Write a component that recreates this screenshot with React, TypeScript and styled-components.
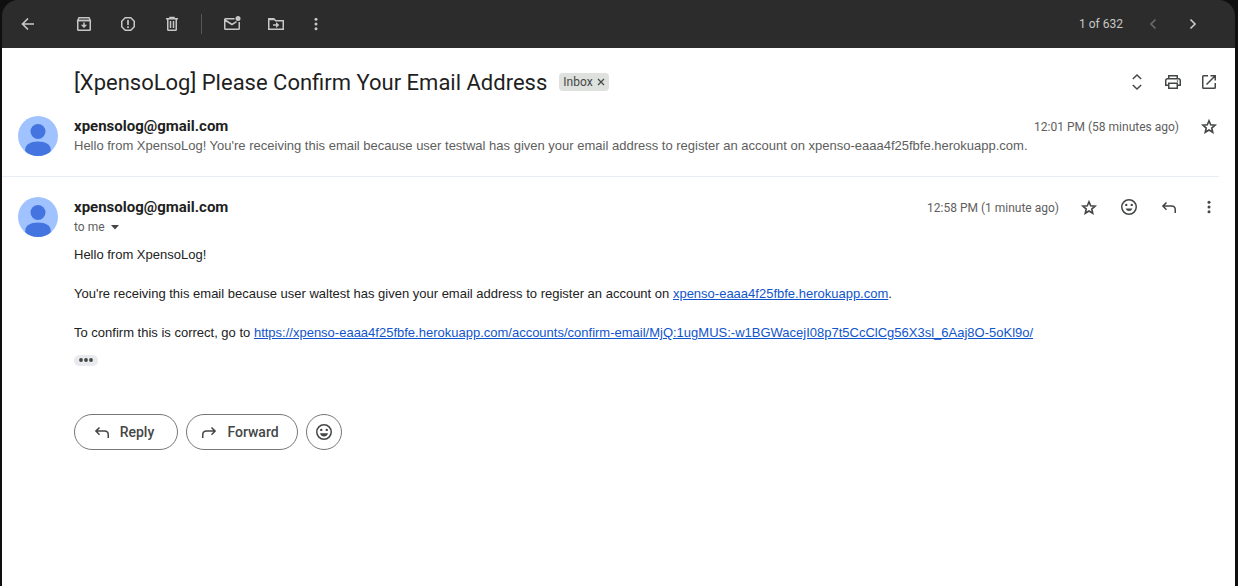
import React from 'react';
import styled, { createGlobalStyle } from 'styled-components';

const GlobalStyle = createGlobalStyle`
  *, *::before, *::after { box-sizing: border-box; }
  body { margin: 0; background: #0f0f0f; }
  button { font: inherit; color: inherit; cursor: pointer; }
`;

const uiFont = `Roboto, 'Liberation Sans', sans-serif`;
const textFont = `'Liberation Sans', Arial, sans-serif`;

const Window = styled.div`
  min-height: 100vh;
  margin: 0 3px 0 2px;
  display: flex;
  flex-direction: column;
  font-family: ${uiFont};
  color: #1f1f1f;
`;

const Toolbar = styled.header`
  display: flex;
  align-items: center;
  justify-content: space-between;
  height: 48px;
  padding: 0 22px 0 4px;
  border-radius: 16px 16px 0 0;
  background: #2c2c2c;
  color: #c7c7c7;
`;

const Group = styled.div`
  display: flex;
  align-items: center;
`;

const IconButton = styled.button<{ $width?: number }>`
  display: flex;
  align-items: center;
  justify-content: center;
  flex: none;
  width: ${({ $width }) => $width ?? 40}px;
  height: 36px;
  padding: 0;
  border: 0;
  background: none;

  &:disabled { color: #6b6b6b; }
`;

const BackButton = styled(IconButton)`
  margin-right: 12px;
`;

const ToolbarDivider = styled.span`
  width: 1px;
  height: 20px;
  margin: 0 8px 0 7px;
  background: #575757;
`;

const PageCount = styled.span`
  margin-right: 10px;
  font-size: 12px;
  line-height: 20px;
`;

const Thread = styled.main`
  flex: 1;
  background: #fff;
`;

const SubjectRow = styled.div`
  display: flex;
  align-items: center;
  justify-content: space-between;
  height: 68px;
  padding: 0 8px 0 72px;
  color: #444746;
`;

const Subject = styled.h1`
  margin: 0 12px 0 0;
  padding-top: 2px;
  font-size: 22px;
  line-height: 28px;
  font-weight: 400;
  color: #1f1f1f;
`;

const Label = styled.span`
  display: flex;
  align-items: center;
  height: 18px;
  padding: 0 4px;
  gap: 4px;
  border-radius: 4px;
  background: #dfe1df;
  font-size: 12px;
  color: #444746;
`;

const LabelRemove = styled.button`
  display: flex;
  padding: 0;
  border: 0;
  background: none;
`;

const Message = styled.article`
  display: flex;
  align-items: flex-start;
  gap: 16px;
  padding: 0 0 20px 16px;
`;

const Divider = styled.hr`
  height: 1px;
  margin: 0 16px 20px 0;
  border: 0;
  background: #e9eef6;
`;

const MessageMain = styled.div`
  flex: 1;
  min-width: 0;
`;

const MessageHead = styled.div`
  display: flex;
  align-items: center;
  justify-content: space-between;
  height: 20px;
  padding-right: 6px;
  color: #444746;
`;

const Sender = styled.h2`
  margin: 0;
  font-size: 15px;
  line-height: 20px;
  font-weight: 700;
  color: #1f1f1f;
`;

const Time = styled.time`
  margin-right: 10px;
  padding-top: 2px;
  font-size: 12px;
  line-height: 20px;
  color: #5e5e5e;
`;

const Snippet = styled.p`
  margin: 0;
  font-family: ${textFont};
  font-size: 13px;
  line-height: 20px;
  color: #5e5e5e;
`;

const Recipient = styled.button`
  display: flex;
  align-items: center;
  gap: 5px;
  height: 20px;
  padding: 0;
  border: 0;
  background: none;
  font-size: 12px;
  line-height: 20px;
  color: #5e5e5e;
`;

const MessageBody = styled.div`
  display: flex;
  flex-direction: column;
  gap: 19px;
  padding-top: 8px;
  font-family: ${textFont};
  font-size: 13px;
  line-height: 20px;
  color: #222;
`;

const Paragraph = styled.p`
  margin: 0;
`;

const Link = styled.a`
  color: #1155cc;
  text-decoration: underline;
`;

const TrimmedButton = styled.button`
  display: flex;
  align-items: center;
  justify-content: center;
  width: 24px;
  height: 11px;
  margin-top: 12px;
  padding: 0;
  border: 0;
  border-radius: 6px;
  background: #e8eaed;
  color: #444746;
`;

const Actions = styled.div`
  display: flex;
  gap: 8px;
  margin-top: 48px;
`;

const ActionButton = styled.button<{ $width: number }>`
  display: flex;
  align-items: center;
  justify-content: center;
  gap: 8px;
  width: ${({ $width }) => $width}px;
  height: 36px;
  padding: 0;
  border: 1px solid #747775;
  border-radius: 18px;
  background: #fff;
  font-size: 14px;
  font-weight: 500;
  color: #444746;
`;

const ActionText = styled.span`
  margin-right: 6px;
`;

type IconProps = { children: React.ReactNode; size?: number };

const Icon = ({ children, size = 20 }: IconProps) => (
  <svg width={size} height={size} viewBox="0 0 20 20" fill="none" stroke="currentColor" strokeWidth="1.5" aria-hidden="true">
    {children}
  </svg>
);

const BackIcon = () => <Icon><path d="M16 10H5M10 4.5 4.5 10l5.500 5.500" strokeWidth="1.700" /></Icon>;
const ArchiveIcon = () => (
  <Icon>
    <path d="M3.750 6.500v9q0 .75.75.75h11q.75 0 .75-.75v-9M3.750 6.500 5 3.750h10l1.250 2.750z" />
    <path d="M4.500 6.500h11" />
    <path d="M10 8.500v3.500" />
    <path d="M6.800 10.700h6.400L10 14z" fill="currentColor" stroke="none" />
  </Icon>
);
const SpamIcon = () => (
  <Icon>
    <path d="M7.200 3.750h5.600l3.450 3.450v5.600l-3.450 3.450H7.200l-3.450-3.450V7.200z" />
    <path d="M10 6v5M10 12.300v1.700" strokeWidth="1.700" />
  </Icon>
);
const TrashIcon = () => (
  <Icon><path d="M4 4.750h12M8 4V3.500h4V4M5.750 5v10.500q0 .75.75.75h7q.75 0 .75-.75V5M8.500 7v7M11.500 7v7" /></Icon>
);
const UnreadIcon = () => (
  <Icon>
    <path d="M12.500 4.750h-9q-.75 0-.75.75v9q0 .75.75.75h13q.75 0 .75-.75V8M3 6l7 4.500L14.500 7.700" />
    <circle cx="16" cy="4.500" r="2.500" fill="currentColor" stroke="none" />
  </Icon>
);
const MoveIcon = () => (
  <Icon>
    <path d="M2.750 15.250V4.750h5l2 2h7.500v8.500zM3 5.500h5.500M7 11h4" />
    <path d="M10 8v6l3.300-3z" fill="currentColor" stroke="none" />
  </Icon>
);
const MoreIcon = () => (
  <Icon>
    <g fill="currentColor" stroke="none">
      <circle cx="10" cy="5.300" r="1.500" /><circle cx="10" cy="10" r="1.500" /><circle cx="10" cy="14.700" r="1.500" />
    </g>
  </Icon>
);
const PrevIcon = () => <Icon><path d="M12.500 5.500 8 10l4.500 4.500" strokeWidth="1.700" /></Icon>;
const NextIcon = () => <Icon><path d="M7.500 5.500 12 10l-4.500 4.500" strokeWidth="1.700" /></Icon>;
const ExpandIcon = () => <Icon><path d="M5.800 7 10 3l4.200 4M5.800 13l4.200 4 4.200-4" /></Icon>;
const PrintIcon = () => (
  <Icon>
    <path d="M5.750 6.500V3.750h8.500V6.500M5.500 13.250H2.750V8.500q0-1.750 1.750-1.750h11q1.750 0 1.750 1.750v4.750H14.500M5.750 11.250h8.500v5h-8.500z" />
    <circle cx="14.500" cy="9" r=".8" fill="currentColor" stroke="none" />
  </Icon>
);
const OpenIcon = () => (
  <Icon><path d="M9 3.750H4.500q-.75 0-.75.75v11q0 .75.75.75h11q.75 0 .75-.75V11M11.500 3.750h4.750V8.500M16 4 7.500 12.500" /></Icon>
);
const StarIcon = () => (
  <Icon><path d="m10 4.800 1.700 4 4.400.4-3.350 2.850 1 4.250-3.750-2.250-3.750 2.250 1-4.250L3.900 9.200l4.400-.4z" strokeWidth="1.600" /></Icon>
);
const SmileIcon = ({ wide = false }: { wide?: boolean }) => (
  <Icon>
    <circle cx="10" cy="10" r="7.250" />
    <g fill="currentColor" stroke="none">
      <circle cx="7.250" cy="7.900" r="1.200" /><circle cx="12.750" cy="7.900" r="1.200" />
      <path d={wide ? 'M6 11.300h8Q13 14.600 10 14.600t-4-3.300z' : 'M6.500 11.500h7Q12.500 14 10 14t-3.500-2.500z'} />
    </g>
  </Icon>
);
const ReplyIcon = () => <Icon><path d="M7.500 5.500 3.900 9.100l3.600 3.600M4 9.100h8.500q3.750 0 3.750 3.750V16" /></Icon>;
const ForwardIcon = () => <Icon><path d="m12.500 5.500 3.600 3.600-3.600 3.600M16 9.100H7.500q-3.750 0-3.750 3.750V16" /></Icon>;

const Avatar = ({ id }: { id: string }) => (
  <svg width="40" height="40" viewBox="0 0 40 40" aria-hidden="true">
    <clipPath id={id}><circle cx="20" cy="20" r="20" /></clipPath>
    <g clipPath={`url(#${id})`}>
      <path fill="#a0c3ff" d="M0 0h40v40H0z" />
      <circle cx="20" cy="15.500" r="7.500" fill="#4374e0" />
      <path fill="#4374e0" d="M7.300 40v-7c0-4 5-7.500 12.700-7.500S32.700 29 32.700 33v7z" />
    </g>
  </svg>
);

export default function App() {
  return (
    <>
      <GlobalStyle />
      <Window>
        <Toolbar>
          <Group>
            <BackButton aria-label="Back to inbox" $width={44}><BackIcon /></BackButton>
            <IconButton aria-label="Archive" $width={44}><ArchiveIcon /></IconButton>
            <IconButton aria-label="Report spam" $width={44}><SpamIcon /></IconButton>
            <IconButton aria-label="Delete" $width={44}><TrashIcon /></IconButton>
            <ToolbarDivider />
            <IconButton aria-label="Mark as unread" $width={44}><UnreadIcon /></IconButton>
            <IconButton aria-label="Move to" $width={44}><MoveIcon /></IconButton>
            <IconButton aria-label="More" $width={36}><MoreIcon /></IconButton>
          </Group>
          <Group>
            <PageCount>1 of 632</PageCount>
            <IconButton aria-label="Newer" disabled><PrevIcon /></IconButton>
            <IconButton aria-label="Older"><NextIcon /></IconButton>
          </Group>
        </Toolbar>
        <Thread>
          <SubjectRow>
            <Group>
              <Subject>[XpensoLog] Please Confirm Your Email Address</Subject>
              <Label>
                Inbox
                <LabelRemove aria-label="Remove label Inbox">
                  <svg width="8" height="8" viewBox="0 0 8 8" stroke="currentColor" strokeWidth="1.200" aria-hidden="true">
                    <path d="m1 1 6 6M7 1 1 7" />
                  </svg>
                </LabelRemove>
              </Label>
            </Group>
            <Group>
              <IconButton aria-label="Expand all" $width={36}><ExpandIcon /></IconButton>
              <IconButton aria-label="Print all" $width={36}><PrintIcon /></IconButton>
              <IconButton aria-label="Open in new window" $width={36}><OpenIcon /></IconButton>
            </Group>
          </SubjectRow>

          <Message>
            <Avatar id="avatar-first" />
            <MessageMain>
              <MessageHead>
                <Sender>xpensolog@gmail.com</Sender>
                <Group>
                  <Time>12:01 PM (58 minutes ago)</Time>
                  <IconButton aria-label="Star"><StarIcon /></IconButton>
                </Group>
              </MessageHead>
              <Snippet>
                Hello from XpensoLog! You're receiving this email because user testwal has given your email address to register an account on xpenso-eaaa4f25fbfe.herokuapp.com.
              </Snippet>
            </MessageMain>
          </Message>
          <Divider />
          <Message>
            <Avatar id="avatar-second" />
            <MessageMain>
              <MessageHead>
                <Sender>xpensolog@gmail.com</Sender>
                <Group>
                  <Time>12:58 PM (1 minute ago)</Time>
                  <IconButton aria-label="Star"><StarIcon /></IconButton>
                  <IconButton aria-label="Add reaction"><SmileIcon /></IconButton>
                  <IconButton aria-label="Reply"><ReplyIcon /></IconButton>
                  <IconButton aria-label="More"><MoreIcon /></IconButton>
                </Group>
              </MessageHead>
              <Recipient>
                to me
                <svg width="10" height="5" viewBox="0 0 10 5" fill="#444746" aria-hidden="true"><path d="M1 0h8L5 4.500z" /></svg>
              </Recipient>
              <MessageBody>
                <Paragraph>Hello from XpensoLog!</Paragraph>
                <Paragraph>
                  You're receiving this email because user waltest has given your email address to register an account on{' '}
                  <Link href="#site">xpenso-eaaa4f25fbfe.herokuapp.com</Link>.
                </Paragraph>
                <Paragraph>
                  To confirm this is correct, go to{' '}
                  <Link href="#confirm">https://xpenso-eaaa4f25fbfe.herokuapp.com/accounts/confirm-email/MjQ:1ugMUS:-w1BGWacejI08p7t5CcClCg56X3sl_6Aaj8O-5oKl9o/</Link>
                </Paragraph>
              </MessageBody>
              <TrimmedButton aria-label="Show trimmed content">
                <svg width="14" height="5" viewBox="0 0 14 5" fill="currentColor" aria-hidden="true">
                  <circle cx="2" cy="2" r="1.900" /><circle cx="7" cy="2" r="1.900" /><circle cx="12" cy="2" r="1.900" />
                </svg>
              </TrimmedButton>
              <Actions>
                <ActionButton $width={104}><ReplyIcon /><ActionText>Reply</ActionText></ActionButton>
                <ActionButton $width={112}><ForwardIcon /><ActionText>Forward</ActionText></ActionButton>
                <ActionButton $width={36} aria-label="Add reaction"><SmileIcon wide /></ActionButton>
              </Actions>
            </MessageMain>
          </Message>
        </Thread>
      </Window>
    </>
  );
}
